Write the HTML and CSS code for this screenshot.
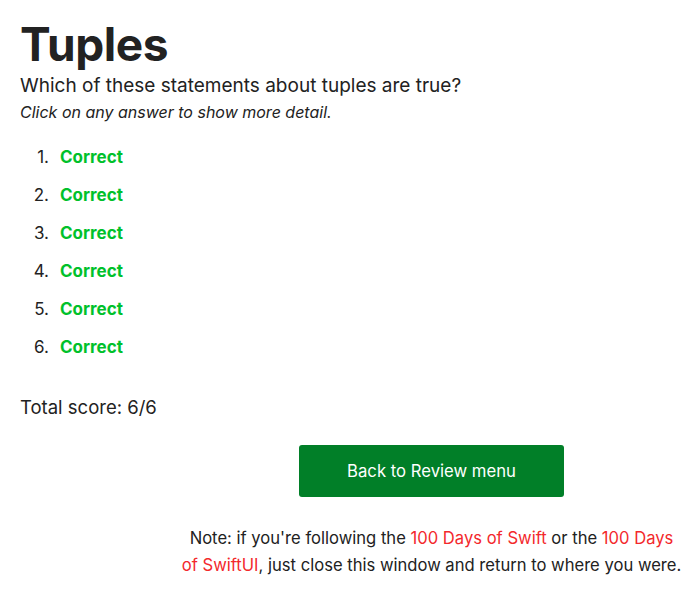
FILE: index.html
```html
<!DOCTYPE html>
<html>
<head>
<meta charset="utf-8">
<link rel="stylesheet" href="styles.css">
</head>
<body>
<main class="page">
  <h1 class="title">Tuples</h1>
  <p class="question">Which of these statements about tuples are true?</p>
  <p class="hint">Click on any answer to show more detail.</p>
  <ol class="answers">
    <li><span class="correct">Correct</span></li>
    <li><span class="correct">Correct</span></li>
    <li><span class="correct">Correct</span></li>
    <li><span class="correct">Correct</span></li>
    <li><span class="correct">Correct</span></li>
    <li><span class="correct">Correct</span></li>
  </ol>
  <p class="score">Total score: 6/6</p>
  <div class="footer">
    <a class="back-button" href="#">Back to Review menu</a>
    <p class="note">Note: if you're following the <a class="link" href="#">100 Days of Swift</a> or the <a class="link" href="#">100 Days of SwiftUI</a>, just close this window and return to where you were.</p>
  </div>
</main>
</body>
</html>
```
FILE: styles.css
```css
html, body {
  margin: 0;
  padding: 0;
  background: #ffffff;
}
body {
  font-family: Inter, "Noto Sans", sans-serif;
  color: #222222;
}
.page {
  padding: 14px 6px 0 20px;
}
.title {
  font-size: 46px;
  font-weight: 700;
  line-height: 60px;
  margin: 0;
  color: #222222;
  letter-spacing: -0.4px;
}
.question {
  font-size: 19px;
  line-height: 24px;
  margin: 0;
}
.hint {
  font-size: 16px;
  font-style: italic;
  line-height: 24px;
  margin: 2px 0 0 0;
}
.answers {
  list-style: none;
  counter-reset: answer;
  margin: 22px 0 0 0;
  padding: 0;
  font-size: 17px;
}
.answers li {
  counter-increment: answer;
  display: flex;
  line-height: 22px;
  margin-bottom: 16px;
}
.answers li::before {
  content: counter(answer) ".";
  width: 29px;
  margin-right: 11px;
  text-align: right;
  color: #222222;
}
.correct {
  color: #00c12b;
  font-weight: 700;
}
.score {
  font-size: 18.5px;
  line-height: 24px;
  margin: 37px 0 0 0;
}
.footer {
  width: 501px;
  margin: 26px 0 0 auto;
  display: flex;
  flex-direction: column;
  align-items: center;
}
.back-button {
  display: flex;
  align-items: center;
  justify-content: center;
  width: 265px;
  height: 52px;
  background: #017f28;
  color: #ffffff;
  text-decoration: none;
  font-size: 16.7px;
  border-radius: 3px;
}
.note {
  text-align: center;
  font-size: 16.6px;
  line-height: 27px;
  margin: 28px 0 0 0;
}
.link {
  color: #f3282c;
  text-decoration: none;
}
```
